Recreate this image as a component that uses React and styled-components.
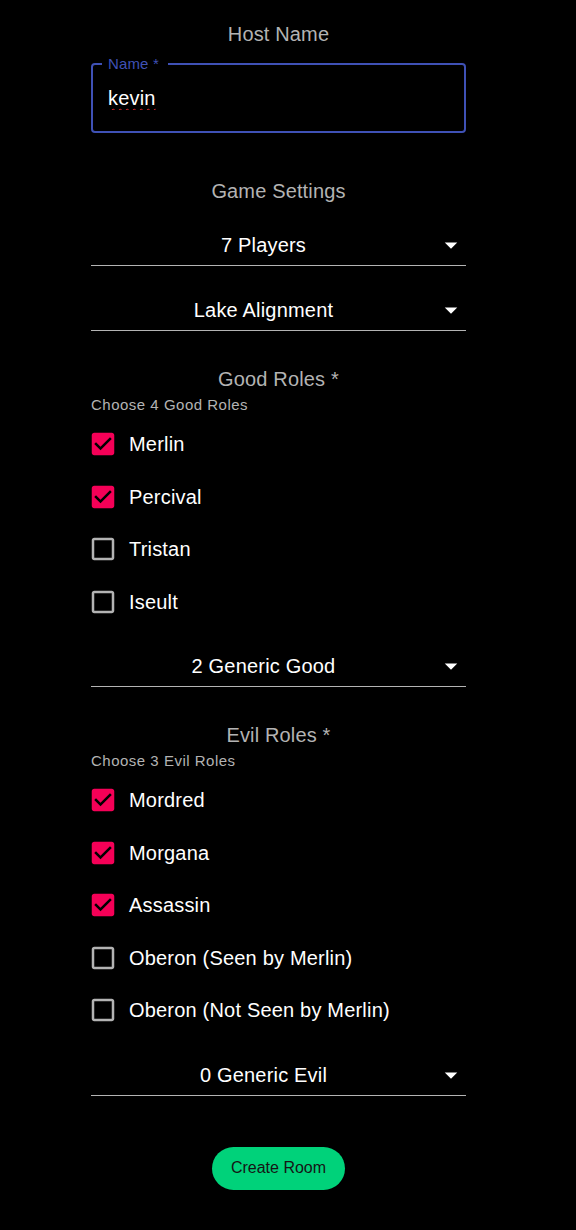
import React from "react";
import styled, { createGlobalStyle } from "styled-components";

const GlobalStyle = createGlobalStyle`
  html, body {
    margin: 0;
    padding: 0;
    background: #000;
    font-family: "Liberation Sans", Arial, sans-serif;
  }
`;

const Page = styled.div`
  min-height: 1230px;
  padding: 22px 0 40px 91px;
  box-sizing: border-box;
`;

const Form = styled.form`
  width: 375px;
  display: flex;
  flex-direction: column;
`;

const Heading = styled.div`
  font-size: 20px;
  line-height: 24px;
  letter-spacing: 0.15px;
  color: #b3b3b3;
  text-align: center;
  margin-top: ${(p) => p.$mt || 0}px;
`;

const Helper = styled.div`
  font-size: 15px;
  line-height: 17px;
  color: #b3b3b3;
  margin-top: 5px;
  letter-spacing: 0.5px;
`;

const Field = styled.fieldset`
  margin: 10px 0 0;
  padding: 14px 9px 21px;
  border: 2px solid #3f51b5;
  border-radius: 4px;
  min-width: 0;
`;

const Legend = styled.legend`
  font-size: 15px;
  line-height: 16px;
  letter-spacing: 0.15px;
  color: #3f51b5;
  padding: 0 9px 0 6px;
`;

const TextInput = styled.input`
  display: block;
  width: 100%;
  box-sizing: border-box;
  background: transparent;
  border: none;
  outline: none;
  padding: 0 0 0 6px;
  font-family: inherit;
  font-size: 20px;
  line-height: 24px;
  letter-spacing: 0.19px;
  height: 24px;
  color: #fff;
  text-decoration: underline wavy #e0262b;
  text-decoration-thickness: 1px;
  text-underline-offset: 3px;
`;

const SelectBox = styled.div`
  display: flex;
  align-items: center;
  margin-top: ${(p) => p.$mt}px;
  border-bottom: 1px solid rgba(255, 255, 255, 0.7);
  height: 38px;
`;

const SelectValue = styled.div`
  flex: 1;
  text-align: center;
  font-size: 20px;
  line-height: 24px;
  letter-spacing: 0.19px;
  color: #fff;
  padding: 6px 0 8px;
`;

const ArrowIcon = styled.svg`
  width: 30px;
  height: 30px;
  fill: #fff;
  flex: none;
  margin-bottom: 2px;
`;

const RoleList = styled.div`
  display: flex;
  flex-direction: column;
  margin-top: 5px;
`;

const RoleRow = styled.label`
  display: flex;
  align-items: center;
  height: 52.5px;
  gap: 11px;
  cursor: pointer;
`;

const BoxIcon = styled.svg`
  width: 30px;
  height: 30px;
  margin-left: -3px;
  flex: none;
  fill: ${(p) => (p.$checked ? "#f50057" : "rgba(255, 255, 255, 0.7)")};
`;

const RoleName = styled.span`
  font-size: 20px;
  line-height: 24px;
  letter-spacing: 0.19px;
  color: #fff;
`;

const ButtonRow = styled.div`
  display: flex;
  justify-content: center;
  margin-top: 51px;
`;

const CreateButton = styled.button`
  height: 43px;
  padding: 0 19px;
  border: none;
  border-radius: 22px;
  background: #00d27a;
  color: #151515;
  font-family: inherit;
  font-size: 16px;
  cursor: pointer;
`;

const CHECKED =
  "M19 3H5c-1.11 0-2 .9-2 2v14c0 1.1.89 2 2 2h14c1.11 0 2-.9 2-2V5c0-1.1-.89-2-2-2zm-9 14l-5-5 1.41-1.41L10 14.17l7.59-7.59L19 8l-9 9z";
const BLANK =
  "M19 5v14H5V5h14m0-2H5c-1.1 0-2 .9-2 2v14c0 1.1.9 2 2 2h14c1.1 0 2-.9 2-2V5c0-1.1-.9-2-2-2z";

const Select = ({ value, mt }) => (
  <SelectBox $mt={mt}>
    <SelectValue>{value}</SelectValue>
    <ArrowIcon viewBox="0 0 24 24">
      <path d="M7 10l5 5 5-5z" />
    </ArrowIcon>
  </SelectBox>
);

const Role = ({ name, checked }) => (
  <RoleRow>
    <BoxIcon viewBox="0 0 24 24" $checked={checked}>
      <path d={checked ? CHECKED : BLANK} />
    </BoxIcon>
    <RoleName>{name}</RoleName>
  </RoleRow>
);

const goodRoles = [
  { name: "Merlin", checked: true },
  { name: "Percival", checked: true },
  { name: "Tristan", checked: false },
  { name: "Iseult", checked: false },
];

const evilRoles = [
  { name: "Mordred", checked: true },
  { name: "Morgana", checked: true },
  { name: "Assassin", checked: true },
  { name: "Oberon (Seen by Merlin)", checked: false },
  { name: "Oberon (Not Seen by Merlin)", checked: false },
];

export default function App() {
  return (
    <>
      <GlobalStyle />
      <Page>
        <Form onSubmit={(e) => e.preventDefault()}>
          <Heading>Host Name</Heading>
          <Field>
            <Legend>Name *</Legend>
            <TextInput defaultValue="kevin" spellCheck={false} />
          </Field>

          <Heading $mt={46}>Game Settings</Heading>
          <Select value="7 Players" mt={24} />
          <Select value="Lake Alignment" mt={26} />

          <Heading $mt={36}>Good Roles *</Heading>
          <Helper>Choose 4 Good Roles</Helper>
          <RoleList>
            {goodRoles.map((r) => (
              <Role key={r.name} {...r} />
            ))}
          </RoleList>
          <Select value="2 Generic Good" mt={20} />

          <Heading $mt={36}>Evil Roles *</Heading>
          <Helper>Choose 3 Evil Roles</Helper>
          <RoleList>
            {evilRoles.map((r) => (
              <Role key={r.name} {...r} />
            ))}
          </RoleList>
          <Select value="0 Generic Evil" mt={20} />

          <ButtonRow>
            <CreateButton type="submit">Create Room</CreateButton>
          </ButtonRow>
        </Form>
      </Page>
    </>
  );
}
